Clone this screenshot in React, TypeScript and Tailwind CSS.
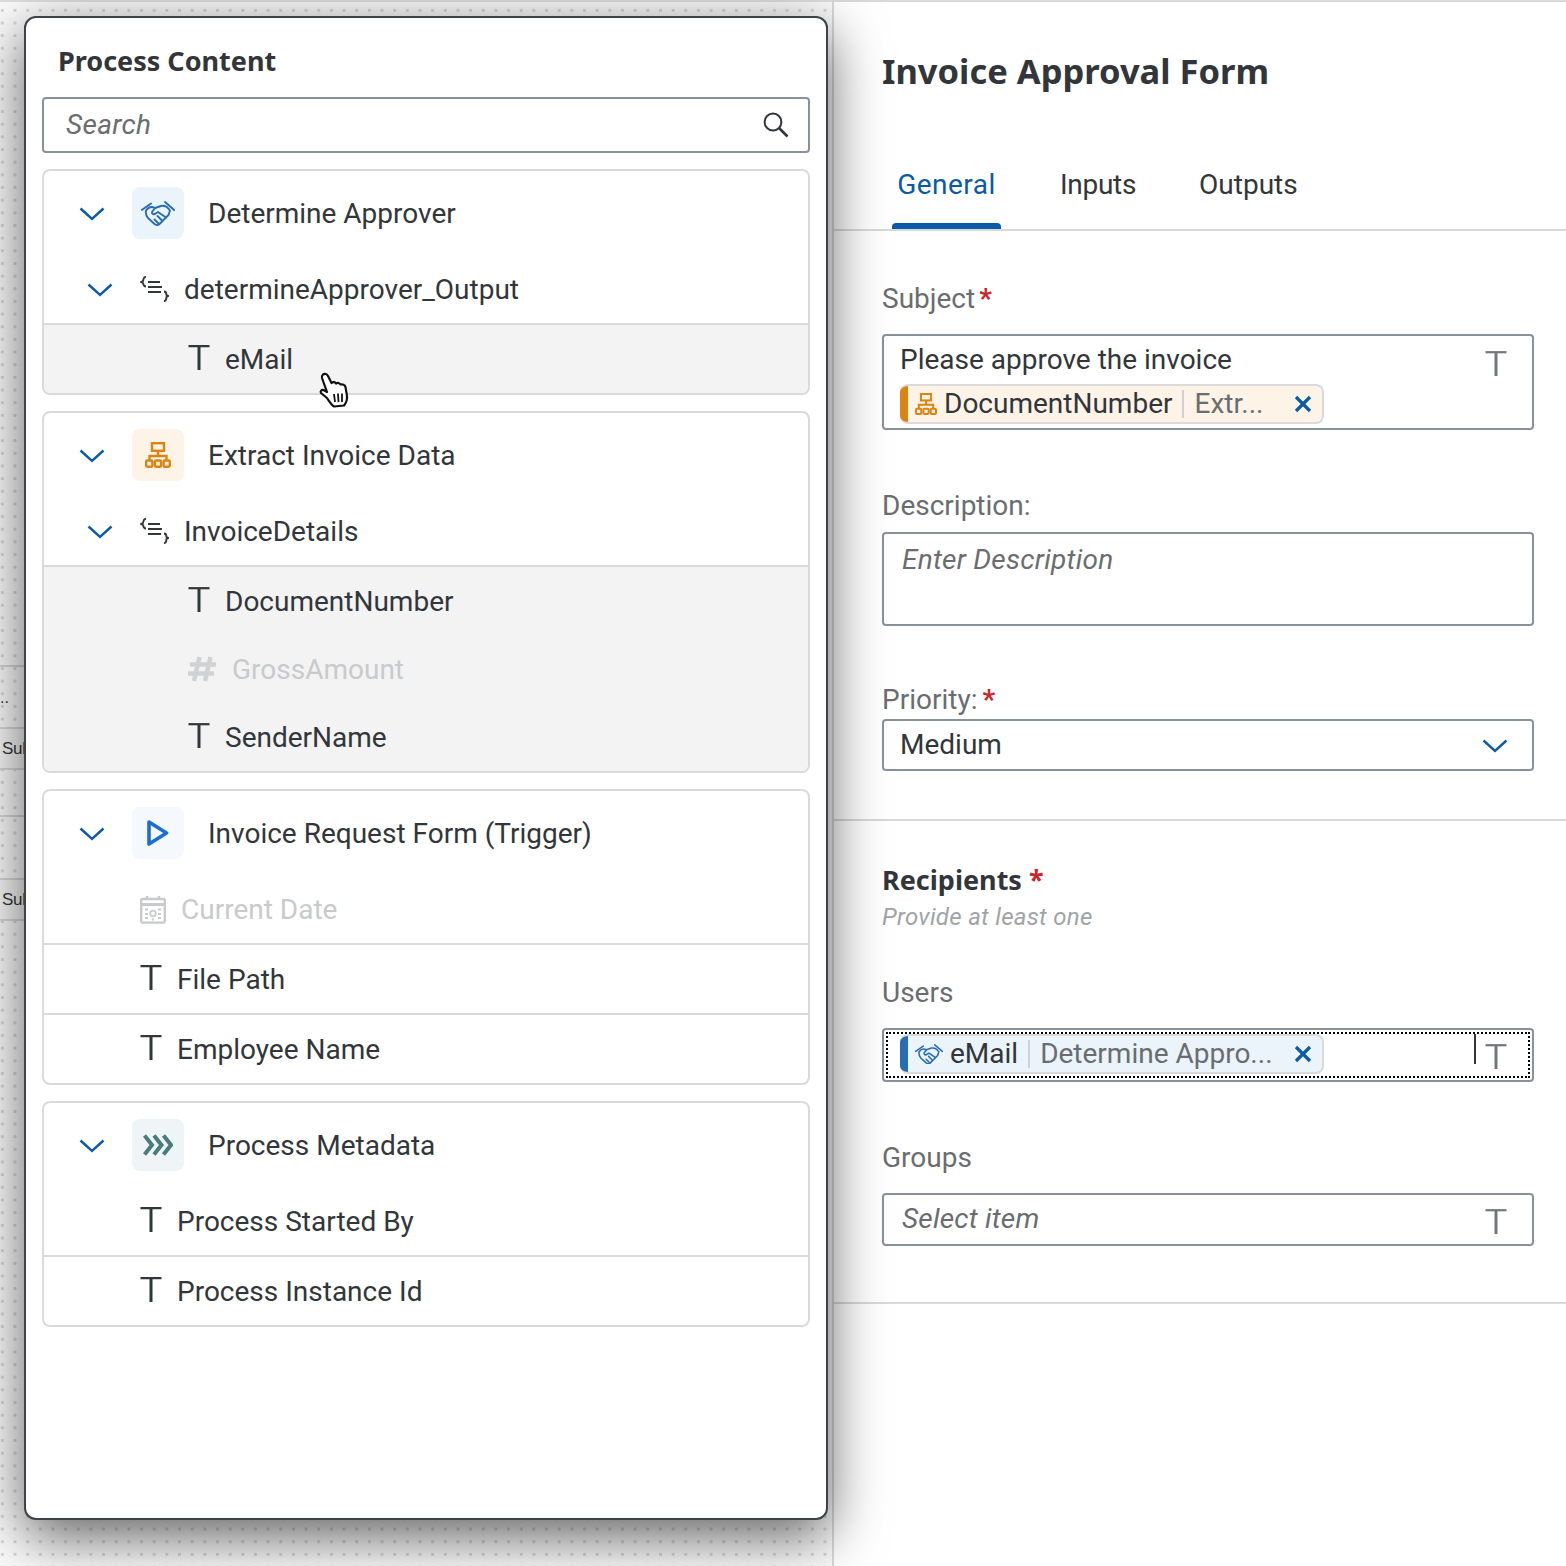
import React from "react";

const ff = "font-['Roboto',sans-serif]";
const bold = "font-['Noto_Sans',sans-serif] font-bold";

const Chevron = ({ className = "" }: { className?: string }) => (
  <svg width="26" height="14" viewBox="0 0 26 14" fill="none" className={className}>
    <path d="M1.5 1.5 L13 12 L24.5 1.5" stroke="#0a5aa6" strokeWidth="2.4" />
  </svg>
);

const TIcon = ({ color = "#32363a", className = "" }: { color?: string; className?: string }) => (
  <svg width="22" height="25" viewBox="0 0 22 25" fill="none" className={className}>
    <path d="M0.5 1.2 H21.5" stroke={color} strokeWidth="2.2" />
    <path d="M11 1 V25" stroke={color} strokeWidth="3" />
  </svg>
);

const Hash = () => (
  <svg width="28" height="26" viewBox="0 0 28 26" fill="none" className="shrink-0">
    <path d="M11.5 1 L6 25 M22.5 1 L17 25 M2 8.5 H28 M0 17.5 H26" stroke="#d0d2d4" strokeWidth="4.6" />
  </svg>
);

const Structure = () => (
  <svg width="29" height="26" viewBox="0 0 29 26" fill="none" className="shrink-0">
    <path d="M6 0.8 C3 0.8 3.5 4 3 5 L1 6 L3 7 C3.5 8 3 10.5 6 10.5" stroke="#32363a" strokeWidth="1.9" />
    <path d="M8 6 H20 M8 11 H22 M8 16 H21" stroke="#32363a" strokeWidth="2.2" />
    <path d="M24 15.5 C27 15.5 26 18 26.5 19 L28.5 20 L26.5 21 C26 22 27 25 24 25" stroke="#32363a" strokeWidth="1.9" />
  </svg>
);

const Calendar = () => (
  <svg width="26" height="29" viewBox="0 0 26 29" fill="none" className="shrink-0">
    <rect x="1.2" y="4" width="23.6" height="23.6" rx="1.5" stroke="#c8cacc" strokeWidth="2.4" />
    <path d="M1 9.5 H25" stroke="#c8cacc" strokeWidth="3" />
    <path d="M7 1 V5 M19 1 V5" stroke="#c8cacc" strokeWidth="2.4" />
    <circle cx="13" cy="18.5" r="2.8" stroke="#c8cacc" strokeWidth="1.8" />
    <path d="M5 14.5 H8 M18 14.5 H21 M5 19 H8 M18 19 H21 M5 23 H8 M12 24.5 H14 M18 23 H21" stroke="#c8cacc" strokeWidth="2.2" />
  </svg>
);

const Handshake = ({ size = 34 }: { size?: number }) => (
  <svg width={size} height={(size * 25) / 34} viewBox="0 0 34 25" fill="none" className="shrink-0">
    <g stroke="#2a6cb4" strokeWidth="1.9" strokeLinejoin="round" strokeLinecap="round">
      <path d="M0.8 9 L10 2.5 M24 1 L33.2 9" />
      <path d="M5 9.5 C7.5 6 11 5.5 14 7 L20 5 C24 4 27 6.5 29 9.5 L27.5 14 L18 23.5 C16.5 24.5 15 24 13.5 23 L7 17 C5 14.5 4.5 12 5 9.5 Z" />
      <path d="M14 7 L11 11 C10.5 13 13 14 14.5 12.5 L17 11 L25 16.5 M21 19.5 L16.5 15 M17.5 22.5 L13.5 18.5" />
    </g>
  </svg>
);

const Network = ({ size = 26 }: { size?: number }) => (
  <svg width={size} height={size} viewBox="0 0 26 26" fill="none" className="shrink-0">
    <g stroke="#dc8310" strokeWidth="2.4">
      <rect x="7" y="1.2" width="12" height="7.6" />
      <path d="M13 9 V14 M4.5 19 V14 H21.5 V19" />
      <rect x="1.2" y="18.5" width="6.2" height="6.2" rx="1.2" />
      <rect x="9.9" y="18.5" width="6.2" height="6.2" rx="1.2" />
      <rect x="18.6" y="18.5" width="6.2" height="6.2" rx="1.2" />
    </g>
  </svg>
);

const Play = () => (
  <svg width="22" height="26" viewBox="0 0 22 26" fill="none">
    <path d="M2 2 L19.5 13 L2 24 Z" stroke="#1a6fd0" strokeWidth="3.6" strokeLinejoin="round" />
  </svg>
);

const Chevrons = () => (
  <svg width="30" height="22" viewBox="0 0 30 22" fill="none">
    <path d="M1.5 1.5 L9 11 L1.5 20.5 M11 1.5 L18.5 11 L11 20.5 M20.5 1.5 L28 11 L20.5 20.5" stroke="#4b7b7b" strokeWidth="4" />
  </svg>
);

const Cross = () => (
  <svg width="18" height="18" viewBox="0 0 18 18" fill="none" className="shrink-0">
    <path d="M2 2 L16 16 M16 2 L2 16" stroke="#0a5aa6" strokeWidth="3.2" />
  </svg>
);

const Search = () => (
  <svg width="26" height="26" viewBox="0 0 26 26" fill="none">
    <circle cx="10" cy="10" r="8.4" stroke="#32363a" strokeWidth="2" />
    <path d="M16 16 L24.5 24.5" stroke="#32363a" strokeWidth="2.6" />
  </svg>
);

const HandCursor = () => (
  <svg width="32" height="36" viewBox="0 0 32 36" className="absolute left-[318px] top-[372px]">
    <path
      d="M5 2.5 C7 1 9 2 10 4 L13.5 11 C15 9.5 17 10 18 11.5 C19.5 10.5 21.5 11 22.5 12.5 C24.5 12 27 13 27.5 15 L29 24 C29.5 28 28 31 26 33.5 L16 34.5 C13.5 33 11 29 9 26 L3 21 C2 19.5 3.5 17.5 5.5 18 L9 20 L4 6 C3.7 4.5 4 3.3 5 2.5 Z"
      fill="#fff"
      stroke="#111"
      strokeWidth="2.2"
      strokeLinejoin="round"
    />
    <path d="M16 22 L17 30 M20 21.5 L20.5 30 M24 21.5 L24 30" stroke="#111" strokeWidth="1.8" />
  </svg>
);

type Row = { kind: "t" | "hash" | "cal"; label: string; muted?: boolean };
type Sub = { label: string };

type CardData = {
  title: string;
  tile: string;
  icon: React.ReactNode;
  sub?: Sub;
  rows: Row[];
  shaded: boolean;
};

const cards: CardData[] = [
  {
    title: "Determine Approver",
    tile: "bg-[#ebf3fb]",
    icon: <Handshake />,
    sub: { label: "determineApprover_Output" },
    rows: [{ kind: "t", label: "eMail" }],
    shaded: true,
  },
  {
    title: "Extract Invoice Data",
    tile: "bg-[#fdf3e7]",
    icon: <Network />,
    sub: { label: "InvoiceDetails" },
    rows: [
      { kind: "t", label: "DocumentNumber" },
      { kind: "hash", label: "GrossAmount", muted: true },
      { kind: "t", label: "SenderName" },
    ],
    shaded: true,
  },
  {
    title: "Invoice Request Form (Trigger)",
    tile: "bg-[#f5f9fd]",
    icon: <Play />,
    rows: [
      { kind: "cal", label: "Current Date", muted: true },
      { kind: "t", label: "File Path" },
      { kind: "t", label: "Employee Name" },
    ],
    shaded: false,
  },
  {
    title: "Process Metadata",
    tile: "bg-[#eff4f6]",
    icon: <Chevrons />,
    rows: [
      { kind: "t", label: "Process Started By" },
      { kind: "t", label: "Process Instance Id" },
    ],
    shaded: false,
  },
];

const Card = ({ c }: { c: CardData }) => (
  <div className="rounded-lg border-2 border-[#dadada] overflow-hidden bg-white">
    <div className="h-[84px] flex items-center pl-[35px]">
      <Chevron className="shrink-0 mt-[2px]" />
      <div className={`ml-[27px] w-[52px] h-[52px] rounded-lg flex items-center justify-center ${c.tile}`}>{c.icon}</div>
      <span className="ml-[24px] mt-[2px] text-[28px] text-[#32363a]">{c.title}</span>
    </div>
    {c.sub && (
      <div className="h-[68px] flex items-center pl-[43px]">
        <Chevron className="shrink-0 mt-[2px]" />
        <div className="ml-[27px] flex items-center gap-[15px]">
          <Structure />
          <span className="mt-[2px] text-[28px] text-[#32363a]">{c.sub.label}</span>
        </div>
      </div>
    )}
    <div className={c.sub ? "border-t-2 border-[#dadada]" : ""}>
      {c.rows.map((r, i) => (
        <div
          key={r.label}
          className={`h-[68px] box-content flex items-center ${c.shaded ? "bg-[#f3f3f3] pl-[144px]" : "pl-[96px]"} ${
            !c.shaded && i > 0 ? "border-t-2 border-[#dadada]" : ""
          }`}
        >
          {r.kind === "t" && <TIcon className="shrink-0 -mt-[4px]" />}
          {r.kind === "hash" && <Hash />}
          {r.kind === "cal" && <Calendar />}
          <span
            className={`mt-[2px] text-[28px] ${r.muted ? "text-[#c8cacc]" : "text-[#32363a]"} ${
              r.kind === "t" ? "ml-[15px]" : r.kind === "hash" ? "ml-[16px]" : "ml-[15px]"
            }`}
          >
            {r.label}
          </span>
        </div>
      ))}
    </div>
  </div>
);

const Label = ({ children, req, gap = "ml-[5px]" }: { children: React.ReactNode; req?: boolean; gap?: string }) => (
  <div className="h-[36px] text-[28px] leading-[38px] text-[#6a6d70]">
    {children}
    {req && <span className={`${gap} text-[#c9252b] font-bold`}>*</span>}
  </div>
);

const Token = ({
  tone,
  icon,
  name,
  source,
}: {
  tone: "orange" | "blue";
  icon: React.ReactNode;
  name: string;
  source: string;
}) => (
  <div
    className={`w-[424px] h-[40px] rounded-lg border-2 border-l-0 border-[#dadada] flex items-center overflow-hidden shrink-0 ${
      tone === "orange" ? "bg-[#fdf3e7]" : "bg-[#ebf3fb]"
    }`}
  >
    <div className={`w-[8px] h-[40px] shrink-0 ${tone === "orange" ? "bg-[#dc8310]" : "bg-[#2a6cb4]"}`} />
    <div className="ml-[7px] shrink-0">{icon}</div>
    <span className="ml-[7px] text-[28px] text-[#32363a] leading-none whitespace-nowrap">{name}</span>
    <div className="ml-[10px] w-[2px] h-[28px] bg-[#cfd1d3] shrink-0" />
    <span className="ml-[10px] text-[28px] text-[#6a6d70] leading-none whitespace-nowrap flex-1">{source}</span>
    <div className="mr-[10px]">
      <Cross />
    </div>
  </div>
);

const Divider = () => <div className="h-[2px] bg-[#d9d9d9]" />;

export default function App() {
  return (
    <div className={`w-[1566px] h-[1566px] overflow-hidden flex bg-white ${ff}`}>
      <div className="relative z-10 w-[832px] h-[1566px] shrink-0 bg-[#fbfbfb] bg-[radial-gradient(#d8d8d8_1.4px,transparent_1.4px)] bg-[size:12.67px_12.67px] bg-[position:-4px_4px]">
        <div className="absolute left-0 top-0 w-full h-[2px] bg-[#dedede]" />
        <div className="absolute left-0 top-[665px] w-[24px] h-[2px] bg-[#d9d9d9]" />
        <div className="absolute left-0 top-[727px] w-[30px] h-[43px] border-y-2 border-[#d9d9d9] bg-[#f7f7f7] text-[17px] tracking-[-0.3px] leading-[40px] text-[#32363a] pl-[2px] font-['Liberation_Sans',sans-serif]">
          Sub
        </div>
        <div className="absolute left-0 top-[690px] text-[16px] leading-[16px] text-[#32363a] font-['Liberation_Sans',sans-serif]">..</div>
        <div className="absolute left-0 top-[815px] w-[24px] h-[2px] bg-[#d9d9d9]" />
        <div className="absolute left-0 top-[878px] w-[30px] h-[43px] border-y-2 border-[#d9d9d9] bg-[#f7f7f7] text-[17px] tracking-[-0.3px] leading-[40px] text-[#32363a] pl-[2px] font-['Liberation_Sans',sans-serif]">
          Sub
        </div>

        <div className="absolute left-[24px] top-[16px] w-[804px] h-[1504px] rounded-xl border-2 border-[#3f4246] bg-white shadow-[0_16px_56px_rgba(0,0,0,0.62)] px-[16px]">
          <h2 className={`pl-[16px] mt-[25px] text-[27px] leading-[36px] text-[#32363a] ${bold}`}>Process Content</h2>
          <div className="mt-[18px] h-[56px] rounded-[4px] border-2 border-[#89919a] flex items-center justify-between pl-[22px] pr-[19px]">
            <span className="text-[28px] italic tracking-[0.3px] text-[#6a6d70]">Search</span>
            <Search />
          </div>
          <div className="mt-[16px] flex flex-col gap-[16px]">
            {cards.map((c) => (
              <Card key={c.title} c={c} />
            ))}
          </div>
        </div>
        <HandCursor />
      </div>

      <div className="w-[734px] h-[1566px] border-l-2 border-t-2 border-[#d9d9d9] bg-white">
        <div className="pl-[48px] pt-[45px]">
          <h1 className={`text-[34.5px] leading-[48px] text-[#32363a] ${bold}`}>Invoice Approval Form</h1>
        </div>
        <div className="mt-[45px] h-[89px] pt-[21px] pl-[58px] flex">
          <div className="relative w-[109px] text-center">
            <span className="text-[28px] tracking-[0.5px] leading-[48px] text-[#0a5aa6]">General</span>
            <div className="absolute left-0 bottom-0 w-[109px] h-[6px] rounded-t-[4px] bg-[#0a5aa6]" />
          </div>
          <span className="ml-[59px] text-[28px] leading-[48px] tracking-[-0.3px] text-[#32363a]">Inputs</span>
          <span className="ml-[63px] text-[28px] leading-[48px] text-[#32363a]">Outputs</span>
        </div>
        <Divider />

        <div className="pl-[48px] pr-[32px]">
          <div className="mt-[49px]">
            <Label req gap="ml-[4px]">Subject</Label>
          </div>
          <div className="mt-[18px] h-[96px] rounded-[4px] border-2 border-[#89919a] pl-[16px] pr-[25px] pt-[4px] flex justify-between">
            <div className="flex flex-col">
              <span className="text-[28px] leading-[40px] text-[#32363a]">Please approve the invoice</span>
              <div className="mt-[4px]">
                <Token tone="orange" icon={<Network size={22} />} name="DocumentNumber" source="Extr..." />
              </div>
            </div>
            <TIcon color="#74777a" className="mt-[11px]" />
          </div>

          <div className="mt-[57px]">
            <Label>Description:</Label>
          </div>
          <div className="mt-[9px] h-[94px] rounded-[4px] border-2 border-[#89919a] pl-[18px] pt-[6px]">
            <span className="text-[28px] leading-[40px] italic tracking-[0.25px] text-[#6a6d70]">Enter Description</span>
          </div>

          <div className="mt-[55px]">
            <Label req>Priority:</Label>
          </div>
          <div className="mt-[2px] h-[52px] rounded-[4px] border-2 border-[#89919a] pl-[16px] pr-[24px] flex items-center justify-between">
            <span className="text-[28px] text-[#32363a]">Medium</span>
            <Chevron className="mt-[2px]" />
          </div>
        </div>

        <div className="mt-[48px]">
          <Divider />
        </div>

        <div className="pl-[48px] pr-[32px]">
          <div className={`mt-[41px] text-[27px] leading-[36px] text-[#32363a] ${bold}`}>
            Recipients<span className="ml-[7px] text-[#c9252b]">*</span>
          </div>
          <div className="mt-[1px] text-[24px] tracking-[0.3px] leading-[36px] italic text-[#a0a3a6]">Provide at least one</div>
          <div className="mt-[39px]">
            <Label>Users</Label>
          </div>
          <div className="mt-[18px] h-[54px] rounded-[4px] border-2 border-[#89919a] p-[2px]">
            <div className="h-full border-2 border-dotted border-black pl-[12px] pr-[21px] flex justify-between">
              <Token tone="blue" icon={<Handshake size={28} />} name="eMail" source="Determine Appro..." />
              <div className="flex">
                <div className="w-[2px] h-[30px] bg-[#32363a]" />
                <TIcon color="#74777a" className="ml-[9px] mt-[10px]" />
              </div>
            </div>
          </div>

          <div className="mt-[57px]">
            <Label>Groups</Label>
          </div>
          <div className="mt-[18px] h-[53px] rounded-[4px] border-2 border-[#89919a] pl-[18px] pr-[25px] flex items-center justify-between">
            <span className="-mt-[2px] text-[28px] italic tracking-[0.2px] text-[#6a6d70]">Select item</span>
            <TIcon color="#74777a" className="mt-[3px]" />
          </div>
        </div>

        <div className="mt-[56px]">
          <Divider />
        </div>
      </div>
    </div>
  );
}
